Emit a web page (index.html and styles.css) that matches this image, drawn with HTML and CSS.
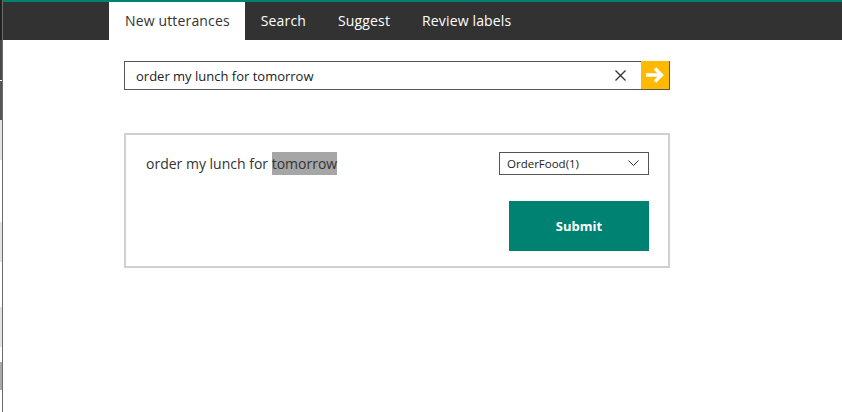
FILE: index.html
```html
<!DOCTYPE html>
<html>
<head>
<meta charset="utf-8">
<link rel="stylesheet" href="styles.css">
</head>
<body>
<div class="edge"></div>
<div class="app">
  <div class="topline"></div>
  <nav class="nav">
    <a class="tab active">New utterances</a>
    <a class="tab">Search</a>
    <a class="tab">Suggest</a>
    <a class="tab">Review labels</a>
  </nav>
  <main class="content">
    <div class="search">
      <span class="search-text">order my lunch for tomorrow</span>
      <span class="clear">
        <svg width="11" height="11" viewBox="0 0 11 11"><path d="M0.5 0.5 L10.5 10.5 M10.5 0.5 L0.5 10.5" stroke="#333" stroke-width="1.3" fill="none"/></svg>
      </span>
      <span class="go">
        <svg width="20" height="18" viewBox="0 0 20 18"><path d="M1 9 H16 M10 2.5 L16.5 9 L10 15.5" stroke="#fff" stroke-width="3.4" fill="none" stroke-linejoin="miter" stroke-linecap="butt"/></svg>
      </span>
    </div>
    <section class="card">
      <div class="row">
        <p class="utterance">order my lunch for <span class="entity">tomorrow</span></p>
        <div class="select">
          <span>OrderFood(1)</span>
          <svg width="11" height="7" viewBox="0 0 11 7"><path d="M0.5 0.5 L5.5 5.5 L10.5 0.5" stroke="#333" stroke-width="1" fill="none"/></svg>
        </div>
      </div>
      <div class="actions">
        <button class="submit">Submit</button>
      </div>
    </section>
  </main>
</div>
</body>
</html>
```
FILE: styles.css
```css
*, *::before, *::after {
  box-sizing: border-box;
}
html, body {
  margin: 0;
  padding: 0;
  height: 100%;
  background: #fff;
}
body {
  display: flex;
  font-family: "Open Sans", "Noto Sans", sans-serif;
  color: #333;
  overflow: hidden;
}
.edge {
  width: 3px;
  flex: none;
  border-right: 1px solid #6b6b6b;
  background: linear-gradient(to bottom,
    #222 0, #222 40px,
    #4a4a4a 40px, #4a4a4a 80px,
    #fff 80px, #fff 81px,
    #555 81px, #555 120px,
    #e2e2e2 120px, #e2e2e2 160px,
    #fff 160px, #fff 222px,
    #e2e2e2 222px, #e2e2e2 262px,
    #fff 262px, #fff 307px,
    #e2e2e2 307px, #e2e2e2 347px,
    #fff 347px, #fff 362px,
    #a9a9a9 362px, #a9a9a9 390px,
    #fff 390px);
}
.app {
  flex: 1;
  display: flex;
  flex-direction: column;
}
.topline {
  height: 2px;
  background: #008272;
}
.nav {
  height: 38px;
  background: #323232;
  display: flex;
  padding-left: 106px;
}
.tab {
  display: flex;
  align-items: center;
  padding: 0 16px 1px;
  font-size: 14px;
  color: #fff;
  letter-spacing: 0.15px;
}
.tab.active {
  background: #fff;
  color: #333;
  padding-right: 15px;
}
.content {
  margin-left: 121px;
  width: 546px;
  padding-top: 21px;
}
.search {
  height: 29px;
  border: 1px solid #555;
  display: flex;
  align-items: stretch;
}
.search-text {
  flex: 1;
  display: flex;
  align-items: center;
  padding-left: 11px;
  font-size: 13px;
  color: #222;
}
.clear {
  width: 36px;
  display: flex;
  align-items: center;
  justify-content: center;
  padding-right: 6px;
}
.go {
  width: 28px;
  margin-top: -1px;
  background: #ffb900;
  display: flex;
  align-items: center;
  justify-content: center;
}
.card {
  margin-top: 43px;
  height: 135px;
  border: 2px solid #d0d0d0;
  padding: 17px 19px 0 20px;
}
.row {
  display: flex;
  justify-content: space-between;
  align-items: flex-start;
}
.utterance {
  margin: 0;
  font-size: 14px;
  line-height: 23px;
  color: #333;
}
.entity {
  background: #a6a6a6;
  display: inline-block;
}
.select {
  width: 150px;
  height: 23px;
  border: 1px solid #555;
  display: flex;
  align-items: center;
  justify-content: space-between;
  padding: 0 9px 0 7px;
  font-size: 11.5px;
  color: #222;
}
.actions {
  display: flex;
  justify-content: flex-end;
  margin-top: 26px;
}
.submit {
  width: 140px;
  height: 50px;
  border: none;
  background: #008272;
  color: #fff;
  font-family: "Open Sans", "Noto Sans", sans-serif;
  font-weight: 700;
  font-size: 13px;
  padding: 0;
}
```
